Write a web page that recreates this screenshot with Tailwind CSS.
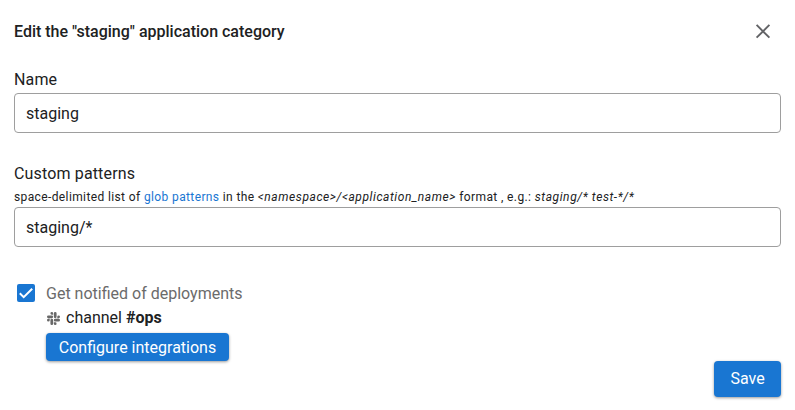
<!DOCTYPE html>
<html lang="en">
<head>
<meta charset="utf-8">
<title>Edit application category</title>
<script src="https://cdn.jsdelivr.net/npm/@tailwindcss/browser@4"></script>
</head>
<body class="bg-white">
<form class="flex h-[410px] w-[795px] flex-col pl-[14px] pr-[14px] pt-[19px] font-['Roboto',sans-serif] text-[16px] leading-6 text-[#202122]">
  <header class="flex h-6 items-center justify-between">
    <h1 class="pt-[2px] text-[16px] font-medium tracking-[0px] whitespace-nowrap">Edit the "staging" application category</h1>
    <button type="button" aria-label="Close" class="mr-[10px]">
      <svg class="block size-[16px]" viewBox="0 0 16 16" fill="none" stroke="#626366" stroke-width="1.9"><path d="M1.6 1.9 14.4 14.7M14.4 1.9 1.6 14.7"/></svg>
    </button>
  </header>
  <label for="name" class="mt-[25px] h-[25px] self-start tracking-[0.15px]">Name</label>
  <input id="name" value="staging" class="h-10 w-[767px] rounded-[4px] border border-[#9e9e9e] px-[11px] outline-none">
  <label for="patterns" class="mt-[29px] h-[23px] self-start tracking-[0.15px]">Custom patterns</label>
  <p class="h-[22px] text-[12px] leading-[24px] tracking-[0.38px] whitespace-nowrap">space-delimited list of <a class="text-[#1976d2]">glob patterns</a> in the <i class="tracking-[0.58px]">&lt;namespace&gt;/&lt;application_name&gt;</i> format , e.g.: <i class="tracking-[0.58px]">staging/* test-*/*</i></p>
  <input id="patterns" value="staging/*" class="h-10 w-[767px] rounded-[4px] border border-[#9e9e9e] px-[11px] outline-none">
  <div class="mt-[34px] flex h-6 items-center">
    <svg class="ml-[3px] mr-[11px] block size-[18px]" viewBox="0 0 18 18"><rect width="18" height="18" rx="2" fill="#1976d2"/><path d="m2.8 9.3 3.9 3.9L15.2 4.7" fill="none" stroke="#fff" stroke-width="2"/></svg>
    <span class="pt-[2px] text-[#6b6b6b]">Get notified of deployments</span>
  </div>
  <div class="ml-8 flex h-6 items-center">
    <svg class="ml-[1px] mt-[3px] mr-[6px] block size-[13px] fill-[#686868]" viewBox="0 0 24 24"><path d="M5.042 15.165a2.528 2.528 0 0 1-2.52 2.523A2.528 2.528 0 0 1 0 15.165a2.527 2.527 0 0 1 2.522-2.52h2.52v2.52zM6.313 15.165a2.527 2.527 0 0 1 2.521-2.52 2.527 2.527 0 0 1 2.521 2.52v6.313A2.528 2.528 0 0 1 8.834 24a2.528 2.528 0 0 1-2.521-2.522v-6.313zM8.834 5.042a2.528 2.528 0 0 1-2.521-2.52A2.528 2.528 0 0 1 8.834 0a2.528 2.528 0 0 1 2.521 2.522v2.52H8.834zM8.834 6.313a2.528 2.528 0 0 1 2.521 2.521 2.528 2.528 0 0 1-2.521 2.521H2.522A2.528 2.528 0 0 1 0 8.834a2.528 2.528 0 0 1 2.522-2.521h6.312zM18.956 8.834a2.528 2.528 0 0 1 2.522-2.521A2.528 2.528 0 0 1 24 8.834a2.528 2.528 0 0 1-2.522 2.521h-2.522V8.834zM17.688 8.834a2.528 2.528 0 0 1-2.523 2.521 2.527 2.527 0 0 1-2.52-2.521V2.522A2.527 2.527 0 0 1 15.165 0a2.528 2.528 0 0 1 2.523 2.522v6.312zM15.165 18.956a2.528 2.528 0 0 1 2.523 2.522A2.528 2.528 0 0 1 15.165 24a2.527 2.527 0 0 1-2.52-2.522v-2.522h2.52zM15.165 17.688a2.527 2.527 0 0 1-2.52-2.523 2.526 2.526 0 0 1 2.52-2.52h6.313A2.527 2.527 0 0 1 24 15.165a2.528 2.528 0 0 1-2.522 2.523h-6.313z"/></svg>
    <span class="pt-[2px]">channel <b class="font-bold">#ops</b></span>
  </div>
  <button type="button" class="ml-8 mt-1 h-7 w-[183px] self-start rounded-[4px] bg-[#1976d2] pt-px whitespace-nowrap text-white shadow-[0_1px_3px_rgba(0,0,0,0.4)]">Configure integrations</button>
  <button type="submit" class="h-9 w-[67px] self-end rounded-[4px] bg-[#1976d2] text-white shadow-[0_1px_3px_rgba(0,0,0,0.4)]">Save</button>
</form>
</body>
</html>
